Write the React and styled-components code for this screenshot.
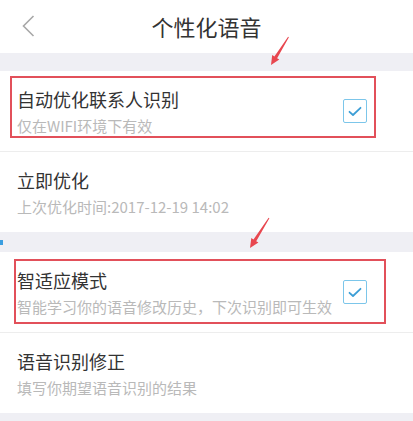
import React from 'react'
import styled, { createGlobalStyle } from 'styled-components'

const GlobalStyle = createGlobalStyle`
  html, body {
    margin: 0;
    padding: 0;
    background: #efeff4;
  }
  body {
    font-family: "Noto Sans CJK SC", "Noto Sans", sans-serif;
    -webkit-font-smoothing: antialiased;
  }
`

const items = [
  [
    { title: '自动优化联系人识别', sub: '仅在WIFI环境下有效', checked: true, mark: { top: 5, left: 10, width: 366, height: 62 } },
    { title: '立即优化', sub: '上次优化时间:2017-12-19 14:02' },
  ],
  [
    { title: '智适应模式', sub: '智能学习你的语音修改历史，下次识别即可生效', checked: true, mark: { top: 7, left: 14, width: 372, height: 65 } },
    { title: '语音识别修正', sub: '填写你期望语音识别的结果' },
  ],
]

// tapered red arrow, thin at the tail, head at the tip
const arrowPoints = (tail, tip) => {
  const dx = tip[0] - tail[0]
  const dy = tip[1] - tail[1]
  const len = Math.hypot(dx, dy)
  const ux = dx / len, uy = dy / len
  const nx = -uy, ny = ux
  const head = 9, hw = 4.2
  const bx = tip[0] - ux * head, by = tip[1] - uy * head
  const p = (x, y) => `${x.toFixed(1)},${y.toFixed(1)}`
  return [
    p(tail[0] + nx * 0.5, tail[1] + ny * 0.5),
    p(bx + nx * 1.6, by + ny * 1.6),
    p(bx + nx * hw, by + ny * hw),
    p(tip[0], tip[1]),
    p(bx - nx * hw, by - ny * hw),
    p(bx - nx * 1.6, by - ny * 1.6),
    p(tail[0] - nx * 0.5, tail[1] - ny * 0.5),
  ].join(' ')
}

const App = () => {
  return (
    <Page>
      <GlobalStyle />
      <Header>
        <Back>
          <svg width="13" height="22" viewBox="0 0 13 22">
            <polyline points="11.5,1 1.5,11 11.5,21" fill="none" stroke="#a8a8a8" strokeWidth="1.6" />
          </svg>
        </Back>
        <Title>个性化语音</Title>
        <span />
      </Header>

      <Band h={18} />
      <Section>
        {items[0].map((it, i) => (
          <Row key={it.title} last={i === 1}>
            <Texts>
              <RowTitle>{it.title}</RowTitle>
              <RowSub>{it.sub}</RowSub>
            </Texts>
            {it.checked && <Check />}
            {it.mark && <Highlight style={it.mark} />}
          </Row>
        ))}
      </Section>

      <Band h={20}>
        <Dot />
      </Band>
      <Section>
        {items[1].map((it, i) => (
          <Row key={it.title} last={i === 1}>
            <Texts>
              <RowTitle>{it.title}</RowTitle>
              <RowSub>{it.sub}</RowSub>
            </Texts>
            {it.checked && <Check />}
            {it.mark && <Highlight style={it.mark} />}
          </Row>
        ))}
      </Section>

      <Arrows width="413" height="421" viewBox="0 0 413 421">
        <polygon points={arrowPoints([288.5, 37], [271, 65])} fill="#e8474f" />
        <polygon points={arrowPoints([269, 218], [250, 248])} fill="#e8474f" />
      </Arrows>
    </Page>
  )
}

const Check = () => (
  <Box>
    <svg width="14" height="11" viewBox="0 0 14 11">
      <polyline points="1.5,5.8 5,9 12.5,1.8" fill="none" stroke="#3c9ed6" strokeWidth="1.8" strokeLinecap="round" strokeLinejoin="round" />
    </svg>
  </Box>
)

export default App

const Page = styled.div`
  position: relative;
  width: 413px;
  height: 421px;
  overflow: hidden;
  background: #efeff4;
`
const Header = styled.div`
  height: 53px;
  background: #fff;
  display: grid;
  grid-template-columns: 56px 1fr 56px;
  align-items: center;
`
const Back = styled.div`
  display: flex;
  align-items: center;
  justify-content: flex-end;
  padding-right: 21px;
  padding-bottom: 2px;
`
const Title = styled.div`
  text-align: center;
  font-size: 22px;
  line-height: 30px;
  color: #333;
  padding-bottom: 1px;
`
const Band = styled.div`
  position: relative;
  height: ${p => p.h}px;
  background: #efeff4;
`
const Dot = styled.span`
  position: absolute;
  left: 0;
  top: 8px;
  width: 3px;
  height: 5px;
  background: #3a9ee0;
`
const Section = styled.div`
  background: #fff;
`
const Row = styled.div`
  position: relative;
  height: 80px;
  box-sizing: border-box;
  padding: 0 46px 0 17px;
  display: flex;
  align-items: center;
  justify-content: space-between;
  border-bottom: ${p => (p.last ? 'none' : '1px solid #ededed')};
  &:first-child {
    height: 81px;
  }
`
const Texts = styled.div`
  display: flex;
  flex-direction: column;
  gap: 5px;
`
const RowTitle = styled.div`
  font-size: 18px;
  line-height: 24px;
  color: #333;
`
const RowSub = styled.div`
  font-size: 15px;
  line-height: 20px;
  color: #b9b9b9;
  white-space: nowrap;
`
const Box = styled.div`
  flex: none;
  width: 24px;
  height: 24px;
  box-sizing: border-box;
  border: 1.5px solid #7cc6ea;
  border-radius: 2px;
  display: flex;
  align-items: center;
  justify-content: center;
`
const Highlight = styled.div`
  position: absolute;
  box-sizing: border-box;
  border: 2px solid #e2505a;
  pointer-events: none;
`
const Arrows = styled.svg`
  position: absolute;
  left: 0;
  top: 0;
  pointer-events: none;
`
